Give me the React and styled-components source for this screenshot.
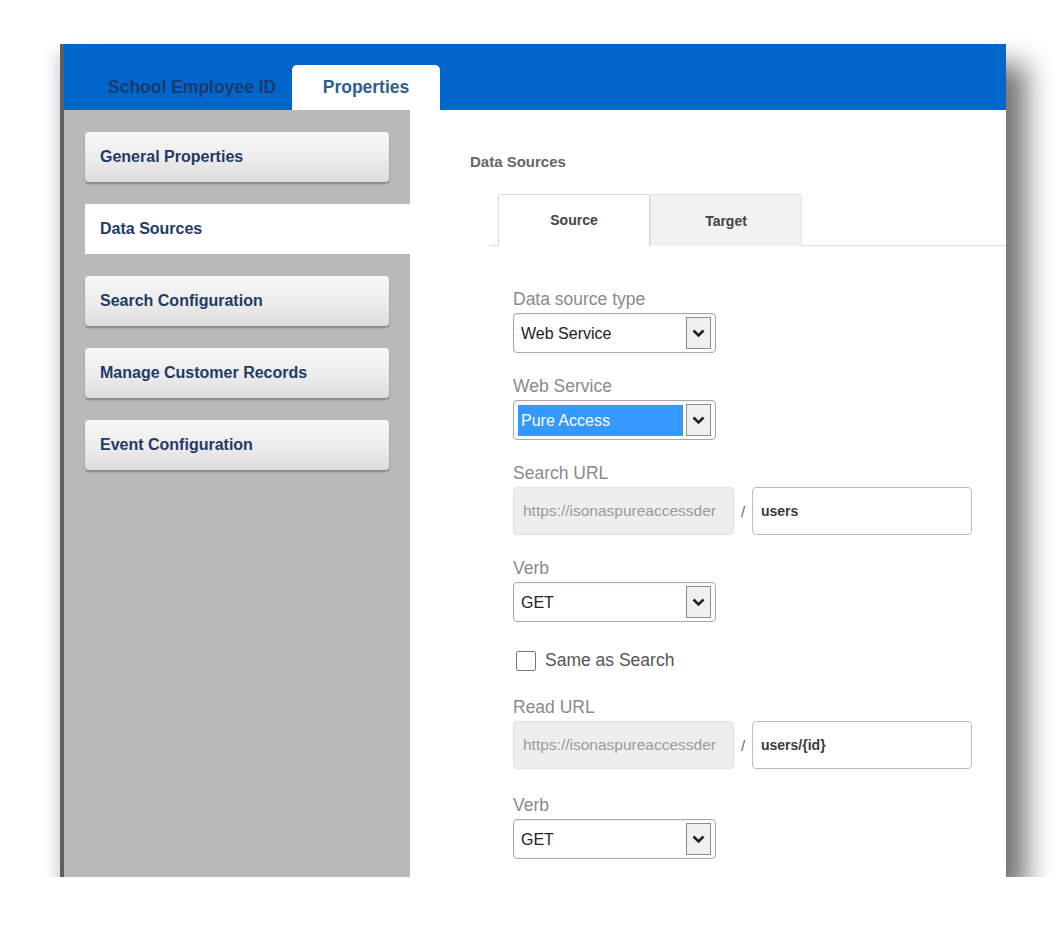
import React from "react";
import styled, { createGlobalStyle } from "styled-components";

const GlobalStyle = createGlobalStyle`
    body {
        margin: 0;
        background: #ffffff;
        font-family: "Liberation Sans", Arial, sans-serif;
    }
`;

const navItems = [
    "General Properties",
    "Data Sources",
    "Search Configuration",
    "Manage Customer Records",
    "Event Configuration",
];

// little chevron used by every drop-down
const Chevron = () => (
    <svg width="13" height="9" viewBox="0 0 13 9">
        <polyline
            points="1.5,1.5 6.5,6.5 11.5,1.5"
            fill="none"
            stroke="#222"
            strokeWidth="2.6"
        />
    </svg>
);

const Dropdown = ({ value, highlighted }) => (
    <Select>
        <SelectValue $highlighted={highlighted}>{value}</SelectValue>
        <DropButton>
            <Chevron />
        </DropButton>
    </Select>
);

const UrlField = ({ base, path }) => (
    <UrlRow>
        <BaseUrl>{base}</BaseUrl>
        <Slash>/</Slash>
        <PathInput>{path}</PathInput>
    </UrlRow>
);

const App = () => {
    const base = "https://isonaspureaccessder";

    return (
        <>
            <GlobalStyle />
            <Frame>
                <Header>
                    <HeaderTab>School Employee ID</HeaderTab>
                    <HeaderTab $active>Properties</HeaderTab>
                </Header>

                <Body>
                    <Sidebar>
                        {navItems.map((item) => (
                            <NavItem key={item} $active={item === "Data Sources"}>
                                {item}
                            </NavItem>
                        ))}
                    </Sidebar>

                    <Content>
                        <Title>Data Sources</Title>

                        <TabRow>
                            <SubTab $active>Source</SubTab>
                            <SubTab>Target</SubTab>
                        </TabRow>

                        <Form>
                            <Field>
                                <Label>Data source type</Label>
                                <Dropdown value="Web Service" />
                            </Field>

                            <Field>
                                <Label>Web Service</Label>
                                <Dropdown value="Pure Access" highlighted />
                            </Field>

                            <Field>
                                <Label>Search URL</Label>
                                <UrlField base={base} path="users" />
                            </Field>

                            <Field>
                                <Label>Verb</Label>
                                <Dropdown value="GET" />
                            </Field>

                            <CheckRow>
                                <CheckBox />
                                <span>Same as Search</span>
                            </CheckRow>

                            <Field $wide>
                                <Label>Read URL</Label>
                                <UrlField base={base} path="users/{id}" />
                            </Field>

                            <Field>
                                <Label>Verb</Label>
                                <Dropdown value="GET" />
                            </Field>
                        </Form>
                    </Content>
                </Body>
            </Frame>
        </>
    );
};

const Frame = styled.div`
    margin: 44px 0 0 60px;
    width: 942px;
    height: 833px;
    border-left: 4px solid #5e5e5e;
    background: #ffffff;
    overflow: hidden;
    box-shadow: 20px 20px 26px rgba(0, 0, 0, 0.55),
        -6px 8px 12px rgba(0, 0, 0, 0.12);
    display: flex;
    flex-direction: column;
`;

const Header = styled.div`
    height: 66px;
    flex-shrink: 0;
    background: #0066cc;
    display: flex;
    align-items: flex-end;
    padding-left: 44px;
`;

const HeaderTab = styled.div`
    width: ${(p) => (p.$active ? "148px" : "184px")};
    height: 45px;
    line-height: 45px;
    font-size: 17.5px;
    font-weight: bold;
    text-align: ${(p) => (p.$active ? "center" : "left")};
    color: ${(p) => (p.$active ? "#2f5f8e" : "#1b3a70")};
    background: ${(p) => (p.$active ? "#ffffff" : "transparent")};
    border-radius: 5px 5px 0 0;
    white-space: nowrap;
`;

const Body = styled.div`
    flex: 1;
    display: flex;
`;

const Sidebar = styled.div`
    width: 346px;
    flex-shrink: 0;
    background: #b9b9b9;
    padding: 22px 0 0 21px;
    box-sizing: border-box;
    display: flex;
    flex-direction: column;
    gap: 22px;
`;

const NavItem = styled.div`
    width: ${(p) => (p.$active ? "325px" : "304px")};
    height: 50px;
    box-sizing: border-box;
    padding-left: 15px;
    display: flex;
    align-items: center;
    font-size: 16px;
    font-weight: bold;
    color: #1f3b66;
    border-radius: ${(p) => (p.$active ? "0" : "4px")};
    background: ${(p) =>
        p.$active
            ? "#ffffff"
            : "linear-gradient(to bottom, #f7f7f7 0%, #ececec 55%, #dcdcdc 100%)"};
    box-shadow: ${(p) => (p.$active ? "none" : "0 2px 2px rgba(0, 0, 0, 0.3)")};
`;

const Content = styled.div`
    flex: 1;
    background: #ffffff;
    padding: 43px 0 0 60px;
`;

const Title = styled.div`
    font-size: 15px;
    line-height: 18px;
    font-weight: bold;
    color: #666666;
`;

const TabRow = styled.div`
    display: flex;
    margin: 23px 0 0 20px;
    padding-left: 8px;
    border-bottom: 1px solid #dddddd;
`;

const SubTab = styled.div`
    width: 152px;
    height: 52px;
    box-sizing: border-box;
    display: flex;
    align-items: center;
    justify-content: center;
    font-size: 14px;
    font-weight: bold;
    color: #444444;
    background: ${(p) => (p.$active ? "#ffffff" : "#f2f2f2")};
    border: 1px solid ${(p) => (p.$active ? "#d8d8d8" : "#e2e2e2")};
    border-bottom: ${(p) => (p.$active ? "1px solid #ffffff" : "none")};
    border-radius: 3px 3px 0 0;
    margin-bottom: -1px;
`;

const Form = styled.div`
    padding: 43px 0 0 43px;
`;

const Field = styled.div`
    margin-bottom: ${(p) => (p.$wide ? "26px" : "23px")};
`;

const Label = styled.div`
    font-size: 17.5px;
    line-height: 20px;
    color: #8a8a8a;
    margin-bottom: 4px;
`;

const Select = styled.div`
    width: 203px;
    height: 40px;
    box-sizing: border-box;
    border: 1px solid #a9a9a9;
    border-radius: 4px;
    padding: 0 4px;
    display: flex;
    align-items: center;
    box-shadow: inset 0 1px 2px rgba(0, 0, 0, 0.08);
`;

const SelectValue = styled.div`
    flex: 1;
    height: 31px;
    line-height: 31px;
    padding-left: 3px;
    margin-right: 3px;
    font-size: 16px;
    color: ${(p) => (p.$highlighted ? "#ffffff" : "#222222")};
    background: ${(p) => (p.$highlighted ? "#3399ff" : "transparent")};
`;

const DropButton = styled.div`
    width: 25px;
    height: 32px;
    box-sizing: border-box;
    border: 1px solid #8c8c8c;
    background: #f0f0f0;
    display: flex;
    align-items: center;
    justify-content: center;
`;

const UrlRow = styled.div`
    display: flex;
    align-items: center;
`;

const BaseUrl = styled.div`
    width: 221px;
    height: 48px;
    box-sizing: border-box;
    padding-left: 9px;
    line-height: 46px;
    font-size: 15.5px;
    color: #9a9a9a;
    background: #eeeeee;
    border: 1px solid #e2e2e2;
    border-radius: 4px;
    white-space: nowrap;
    overflow: hidden;
`;

const Slash = styled.div`
    width: 18px;
    text-align: center;
    font-size: 15px;
    color: #666666;
`;

const PathInput = styled.div`
    width: 220px;
    height: 48px;
    box-sizing: border-box;
    padding-left: 8px;
    line-height: 46px;
    font-size: 14px;
    font-weight: bold;
    color: #3a3a3a;
    border: 1px solid #bdbdbd;
    border-radius: 4px;
`;

const CheckRow = styled.div`
    display: flex;
    align-items: center;
    gap: 9px;
    margin: 28px 0 26px 3px;
    font-size: 17.5px;
    color: #555555;
`;

const CheckBox = styled.div`
    width: 20px;
    height: 20px;
    box-sizing: border-box;
    border: 1.5px solid #777777;
    border-radius: 2px;
    background: #ffffff;
`;

export default App;
